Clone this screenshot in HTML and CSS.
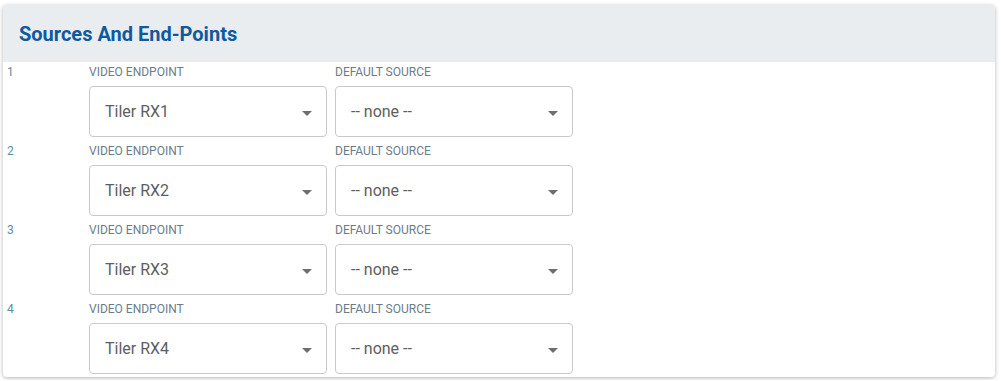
FILE: index.html
```html
<!DOCTYPE html>
<html lang="en">

<head>
  <meta charset="UTF-8" />
  <title>Sources And End-Points</title>
  <link rel="stylesheet" href="styles.css">
</head>

<body>
  <div class="card">
    <div class="card-header">
      <h1>Sources And End-Points</h1>
    </div>

    <div class="card-body">
      <div class="row">
        <div class="row-num">1</div>
        <div class="field">
          <label>Video Endpoint</label>
          <div class="select"><span>Tiler RX1</span><i class="caret"></i></div>
        </div>
        <div class="field">
          <label>Default Source</label>
          <div class="select"><span>-- none --</span><i class="caret"></i></div>
        </div>
      </div>

      <div class="row">
        <div class="row-num">2</div>
        <div class="field">
          <label>Video Endpoint</label>
          <div class="select"><span>Tiler RX2</span><i class="caret"></i></div>
        </div>
        <div class="field">
          <label>Default Source</label>
          <div class="select"><span>-- none --</span><i class="caret"></i></div>
        </div>
      </div>

      <div class="row">
        <div class="row-num">3</div>
        <div class="field">
          <label>Video Endpoint</label>
          <div class="select"><span>Tiler RX3</span><i class="caret"></i></div>
        </div>
        <div class="field">
          <label>Default Source</label>
          <div class="select"><span>-- none --</span><i class="caret"></i></div>
        </div>
      </div>

      <div class="row">
        <div class="row-num">4</div>
        <div class="field">
          <label>Video Endpoint</label>
          <div class="select"><span>Tiler RX4</span><i class="caret"></i></div>
        </div>
        <div class="field">
          <label>Default Source</label>
          <div class="select"><span>-- none --</span><i class="caret"></i></div>
        </div>
      </div>
    </div>
  </div>
</body>

</html>
```

FILE: styles.css
```css
* {
  box-sizing: border-box;
}

body {
  margin: 0;
  padding: 5px 6px 3px 3px;
  background: #ffffff;
  font-family: Roboto, 'Liberation Sans', sans-serif;
}

.card {
  background: #ffffff;
  border-radius: 4px;
  box-shadow: 0 1px 4px rgba(0, 0, 0, 0.3);
  overflow: hidden;
}

.card-header {
  background: #e9edf0;
  height: 57px;
  display: flex;
  align-items: center;
  padding-left: 16px;
}

h1 {
  margin: 0;
  font-size: 20px;
  font-weight: bold;
  color: #0f5a9e;
}

.card-body {
  padding-bottom: 3px;
}

.row {
  display: grid;
  grid-template-columns: 78px 238px 238px;
  column-gap: 8px;
  padding-top: 3px;
  margin-bottom: 4px;
}

.row:last-child {
  margin-bottom: 0;
}

.row-num {
  padding-left: 4px;
  font-size: 12px;
  line-height: 14px;
  color: #5f8ca3;
}

.field {
  display: flex;
  flex-direction: column;
}

.field label {
  font-size: 12px;
  line-height: 14px;
  text-transform: uppercase;
  color: #6b7d89;
  margin-bottom: 7px;
}

.select {
  height: 51px;
  border: 1px solid #c9c9c9;
  border-radius: 4px;
  display: flex;
  align-items: center;
  justify-content: space-between;
  padding: 0 14px 0 15px;
  font-size: 16px;
  color: #5e5e5e;
}

.caret {
  width: 0;
  height: 0;
  border-left: 5px solid transparent;
  border-right: 5px solid transparent;
  border-top: 5px solid #6e6e6e;
  margin-top: 3px;
}
```
